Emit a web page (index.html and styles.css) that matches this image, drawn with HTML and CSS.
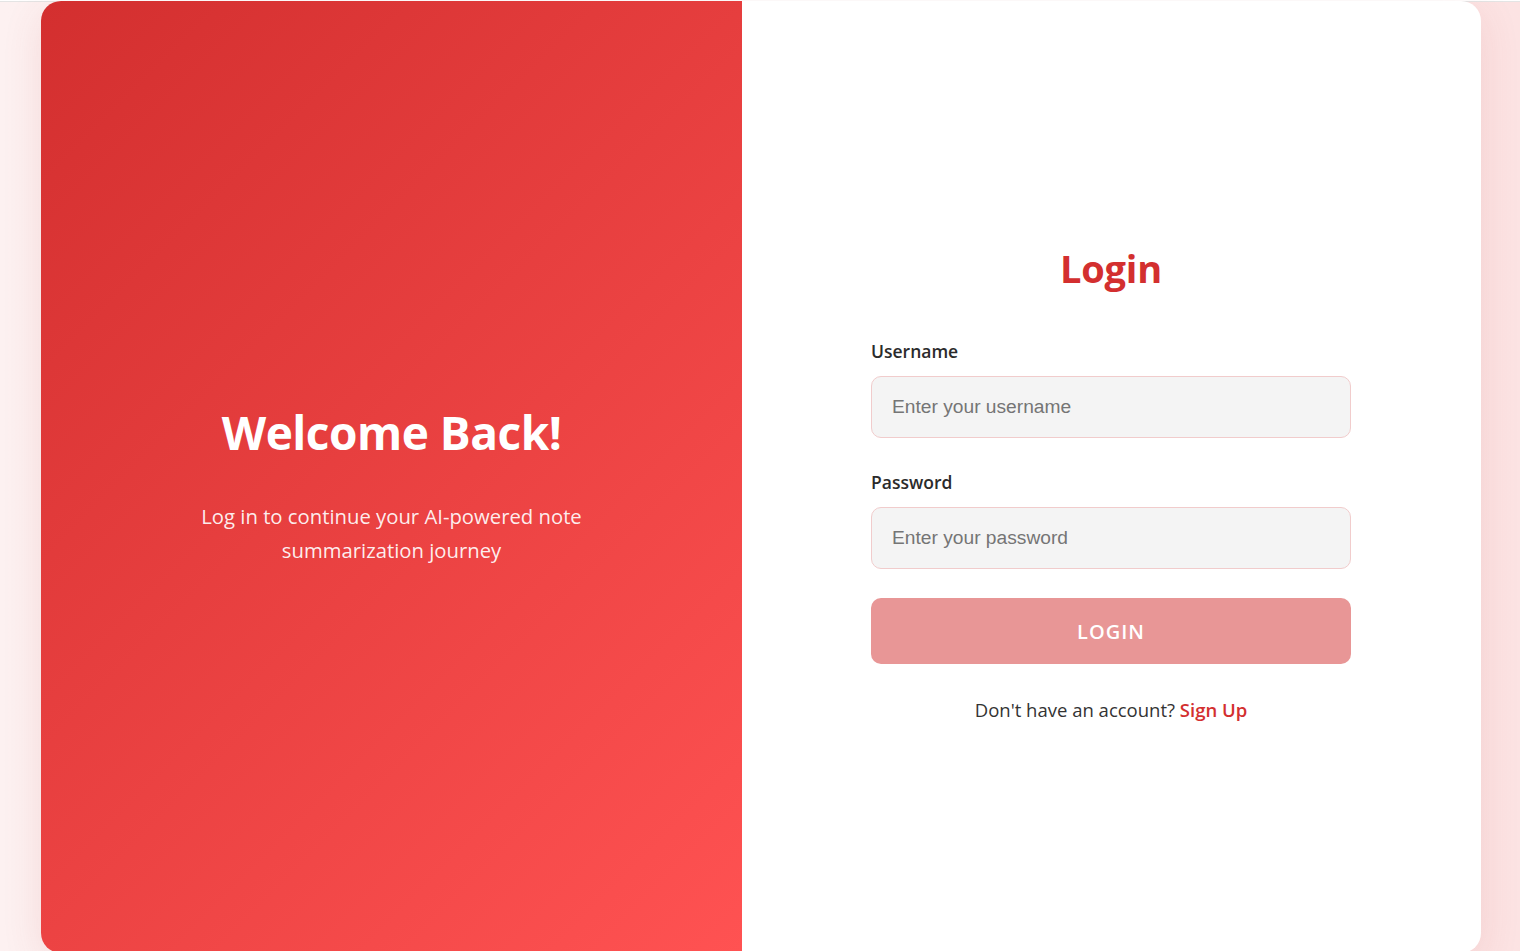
FILE: index.html
```html
<!DOCTYPE html>
<html lang="en">
<head>
<meta charset="utf-8">
<title>Login</title>
<link rel="stylesheet" href="styles.css">
</head>
<body>
<div class="topline"></div>
<main class="card">
  <section class="hero">
    <h1 class="hero-title">Welcome Back!</h1>
    <p class="hero-text">Log in to continue your AI-powered note summarization journey</p>
  </section>
  <section class="form-side">
    <form class="form">
      <h2 class="form-title">Login</h2>
      <div class="field">
        <label class="label" for="username">Username</label>
        <input class="input" id="username" type="text" placeholder="Enter your username">
      </div>
      <div class="field">
        <label class="label" for="password">Password</label>
        <input class="input" id="password" type="password" placeholder="Enter your password">
      </div>
      <button class="btn" type="button">LOGIN</button>
      <p class="signup">Don't have an account? <a class="signup-link" href="#">Sign Up</a></p>
    </form>
  </section>
</main>
</body>
</html>
```

FILE: styles.css
```css
* { box-sizing: border-box; }
html, body { margin: 0; padding: 0; height: 100%; overflow: hidden; }
body {
  background: linear-gradient(90deg, #fdf1f1 0%, #fdeaea 60%, #fce3e3 100%);
  font-family: "Open Sans", "Noto Sans", sans-serif;
}
.topline { height: 2px; background: #fff; border-bottom: 1px solid #e4e4e4; }
.card {
  margin: -1px 0 0 41px;
  width: 1440px;
  height: 952px;
  display: grid;
  grid-template-columns: 701px 1fr;
  border-radius: 20px;
  overflow: hidden;
  background: #fff;
  box-shadow: 0 10px 40px rgba(180, 60, 60, 0.12);
}
.hero {
  background: linear-gradient(135deg, #d32f2f 0%, #ff5252 100%);
  color: #fff;
  display: flex;
  flex-direction: column;
  align-items: center;
  justify-content: center;
  text-align: center;
  padding: 18px 140px 0;
}
.hero-title {
  margin: 0 0 38px;
  font-size: 46px;
  font-weight: 700;
  letter-spacing: -0.5px;
  line-height: 1.2;
}
.hero-text {
  margin: 0;
  font-size: 20.3px;
  line-height: 34px;
  color: rgba(255,255,255,0.92);
}
.form-side {
  display: flex;
  align-items: center;
  justify-content: center;
  padding: 14px 1px 0 0;
}
.form { width: 480px; }
.form-title {
  margin: 0 0 47px;
  text-align: center;
  color: #d32f2f;
  font-size: 38px;
  font-weight: 700;
  line-height: 1.2;
  letter-spacing: -0.2px;
}
.field { margin-bottom: 32px; }
.field + .field { margin-bottom: 29px; }
.label {
  display: block;
  font-size: 17.5px;
  font-weight: 600;
  color: #2b2b2b;
  margin-bottom: 13px;
}
.input {
  display: block;
  width: 100%;
  height: 62px;
  border: 1px solid #f1cccc;
  border-radius: 10px;
  background: #f4f4f4;
  padding: 0 20px;
  font-family: "Liberation Sans", Arial, sans-serif;
  font-size: 19.2px;
  color: #333;
  outline: none;
}
.input::placeholder { color: #757575; }
.btn {
  display: block;
  width: 100%;
  height: 66px;
  border: 0;
  border-radius: 10px;
  background: #e89696;
  color: #fff;
  font-family: "Open Sans", "Noto Sans", sans-serif;
  font-size: 20px;
  font-weight: 600;
  letter-spacing: 1px;
  padding-top: 3px;
}
.signup {
  margin: 33px 0 0;
  text-align: center;
  font-size: 18.5px;
  color: #333;
}
.signup-link {
  color: #d32f2f;
  font-weight: 600;
  text-decoration: none;
}
```
